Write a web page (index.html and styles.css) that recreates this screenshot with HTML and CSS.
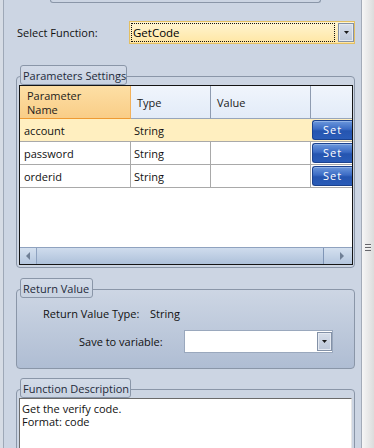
FILE: index.html
```html
<!DOCTYPE html>
<html>
<head>
<meta charset="utf-8">
<link rel="stylesheet" href="styles.css">
</head>
<body>
<div class="window">
  <div class="edge-left"></div>
  <div class="panel">
    <div class="top-group"></div>

    <div class="func-row">
      <span class="func-label">Select Function:</span>
      <div class="combo combo-active">
        <span class="combo-focus">GetCode</span>
        <span class="drop"><svg width="5" height="3" viewBox="0 0 5 3"><path d="M0 0H5L2.5 3Z" fill="#1a1a1a"/></svg></span>
      </div>
    </div>

    <div class="group group-params">
      <div class="group-tab tab-params">Parameters Settings</div>
      <div class="group-box box-params">
        <div class="grid">
          <div class="grid-head">
            <div class="hc hc-sel">Parameter<br>Name</div>
            <div class="hc">Type</div>
            <div class="hc">Value</div>
            <div class="hc hc-last"></div>
          </div>
          <div class="grid-row row-sel">
            <div class="c">account</div><div class="c">String</div><div class="c"></div>
            <div class="c c-btn"><span class="set-btn">Set</span></div>
          </div>
          <div class="grid-row">
            <div class="c">password</div><div class="c">String</div><div class="c"></div>
            <div class="c c-btn"><span class="set-btn">Set</span></div>
          </div>
          <div class="grid-row">
            <div class="c">orderid</div><div class="c">String</div><div class="c"></div>
            <div class="c c-btn"><span class="set-btn">Set</span></div>
          </div>
          <div class="grid-empty"></div>
          <div class="hscroll">
            <div class="hs-btn hs-left"><svg width="4" height="8" viewBox="0 0 4 8"><path d="M4 0V8L0 4Z" fill="#6f7f96"/></svg></div>
            <div class="hs-thumb"></div>
            <div class="hs-btn hs-right"><svg width="4" height="8" viewBox="0 0 4 8"><path d="M0 0V8L4 4Z" fill="#6f7f96"/></svg></div>
          </div>
        </div>
      </div>
    </div>

    <div class="group group-return">
      <div class="group-tab tab-return">Return Value</div>
      <div class="group-box box-return">
        <div class="rv-row rv-type">
          <span class="rv-label">Return Value Type:</span>
          <span class="rv-value">String</span>
        </div>
        <div class="rv-row rv-save">
          <span class="rv-label2">Save to variable:</span>
          <div class="combo combo-white">
            <span class="combo-text"></span>
            <span class="drop"><svg width="5" height="3" viewBox="0 0 5 3"><path d="M0 0H5L2.5 3Z" fill="#1a1a1a"/></svg></span>
          </div>
        </div>
      </div>
    </div>

    <div class="group group-desc">
      <div class="group-tab tab-desc">Function Description</div>
      <div class="group-box box-desc">
        <div class="desc-text"><div class="desc-line">Get the verify code.</div><div class="desc-line">Format: code</div></div>
      </div>
    </div>
  </div>
  <div class="vscroll"><span class="grip"></span></div>
</div>
</body>
</html>
```

FILE: styles.css
```css
* { box-sizing: border-box; }
html, body { margin: 0; padding: 0; }
body {
  width: 374px;
  height: 448px;
  overflow: hidden;
  background: #ccd5e3;
  font-family: "Open Sans", "Noto Sans", sans-serif;
  font-size: 11px;
  color: #1b1b1b;
}
.window { display: flex; height: 448px; }
.edge-left {
  width: 4px;
  background: #d6dce5;
  border-right: 1px solid #9ea8b7;
}
.panel {
  width: 357px;
  display: flex;
  flex-direction: column;
  background: #ccd5e3;
}
.vscroll {
  width: 13px;
  border-left: 1px solid #a3abb8;
  background: linear-gradient(to right, #f6f6f6, #dcdcdc);
  display: flex;
  justify-content: center;
}
.grip {
  margin-top: 244px;
  width: 6px;
  height: 7px;
  background: repeating-linear-gradient(#66666b 0 1px, #f2f2f2 1px 2px, transparent 2px 3px);
}

.top-group {
  flex: none;
  margin-left: 46px;
  width: 271px;
  height: 3px;
  border: 1px solid #8a96a8;
  border-top: none;
  border-radius: 0 0 3px 3px;
}

.func-row {
  flex: none;
  margin-top: 18px;
  display: flex;
  align-items: center;
  height: 23px;
}
.func-label {
  width: 125px;
  padding-left: 13px;
  color: #111;
}
.combo {
  display: flex;
  align-items: center;
  height: 23px;
  border: 1px solid #e3bf62;
  padding: 1px 0 1px 1px;
}
.combo-active {
  width: 226px;
  background: linear-gradient(#fff5d2, #ffe6a3);
}
.combo-focus {
  flex: 1;
  height: 19px;
  border: 1px dotted #111;
  padding-left: 1px;
  line-height: 17px;
  font-size: 11.5px;
  color: #000;
}
.drop {
  width: 16px;
  height: 19px;
  margin-left: 3px;
  border: 1px solid #8391a7;
  background: linear-gradient(#d7deea, #bcc7d8);
  box-shadow: inset 0 0 0 1px #e4e9f1;
  display: flex;
  align-items: center;
  justify-content: center;
}

.group { flex: none; margin: 0 6px 0 12px; display: flex; flex-direction: column; }
.group-params { margin-top: 21px; }
.group-return { margin-top: 10px; }
.group-desc { margin-top: 9px; }
.group-tab {
  position: relative;
  z-index: 1;
  margin-left: 4px;
  margin-bottom: -9px;
  height: 20px;
  border: 1px solid #8a96a8;
  border-radius: 3px;
  background: linear-gradient(#d3dbe8, #c8d2e1);
  padding-left: 2px;
  padding-top: 1px;
  line-height: 17px;
  color: #1e2a3a;
  white-space: nowrap;
}
.tab-params { width: 107px; }
.tab-return { width: 73px; }
.tab-desc { width: 111px; }
.group-box {
  border: 1px solid #8a96a8;
  border-radius: 4px;
}
.box-params { padding: 8px 1px 2px 2px; }

.grid {
  width: 334px;
  height: 180px;
  border: 1px solid #141414;
  display: flex;
  flex-direction: column;
  background: #fff;
}
.grid-head {
  flex: none;
  display: grid;
  grid-template-columns: 111px 80px 100px 41px;
  height: 33px;
}
.hc {
  border-right: 1px solid #8e9bb0;
  border-bottom: 1px solid #97a5ba;
  background: linear-gradient(#f0f5fc, #e2ebf8);
  padding-left: 6px;
  padding-top: 2px;
  display: flex;
  align-items: center;
  line-height: 14px;
  color: #1b1b1b;
}
.hc-sel {
  padding-left: 7px;
  background: linear-gradient(#fddfa5, #f9cd87);
  border-right: 1px solid #f3b15a;
  border-bottom: 1px solid #ef9a32;
}
.hc-last { border-right: none; }
.grid-row {
  flex: none;
  display: grid;
  grid-template-columns: 111px 80px 100px 41px;
  height: 23px;
  border-bottom: 1px solid #a9a9a9;
}
.c {
  border-right: 1px solid #a9a9a9;
  padding-left: 4px;
  padding-top: 1px;
  line-height: 21px;
  color: #111;
}
.grid-row .c:nth-child(2) { padding-left: 3px; }
.row-sel { background: #ffefc0; }
.row-sel .c { border-right-color: transparent; }
.c-btn { border-right: none; padding: 1px 0 1px 1px; }
.set-btn {
  display: block;
  height: 20px;
  border: 1px solid #1b428f;
  border-right: none;
  border-radius: 3px 0 0 3px;
  background: linear-gradient(#6b97dc 0%, #3b6bc4 45%, #2555b0 55%, #2a5cb8 100%);
  box-shadow: inset 0 1px 0 #8fb1e6;
  color: #fff;
  text-align: center;
  line-height: 18px;
  letter-spacing: 1px;
  font-size: 11px;
}
.grid-empty { flex: 1; background: #fff; }
.hscroll {
  flex: none;
  height: 17px;
  display: flex;
  border-top: 1px solid #8fa2bf;
  background: linear-gradient(#d4e0ef, #b4c6de);
}
.hs-btn { display: flex; align-items: center; }
.hs-left { width: 17px; padding-left: 6px; border-right: 1px solid #8ea2c0; }
.hs-thumb {
  flex: 1;
  background: linear-gradient(#cfdced, #aec1da);
  border-right: 1px solid #7f95b6;
}
.hs-right { width: 28px; padding-left: 16px; }

.box-return {
  padding: 15px 0 15px 0;
  background: linear-gradient(#cdd6e4, #afbdd3);
}
.rv-row { display: flex; align-items: center; }
.rv-type { height: 16px; padding-left: 26px; }
.rv-label { width: 107px; color: #111; }
.rv-value { color: #111; }
.rv-save { margin-top: 9px; padding-left: 62px; }
.rv-label2 { width: 105px; color: #111; }
.combo-white {
  width: 149px;
  background: #fff;
  border: 1px solid #9aa8bd;
}
.combo-white .combo-text { flex: 1; }
.combo-white .drop { margin-left: 0; width: 15px; }

.box-desc {
  padding: 8px 2px 0 2px;
  height: 80px;
}
.desc-text {
  height: 80px;
  background: #fff;
  border-top: 1px solid #6b6b6b;
  border-left: 1px solid #6b6b6b;
  border-right: 1px solid #e6e6e6;
  padding: 3px 2px;
  color: #111;
}
.desc-line {
  height: 13px;
  line-height: 13px;
}
```
